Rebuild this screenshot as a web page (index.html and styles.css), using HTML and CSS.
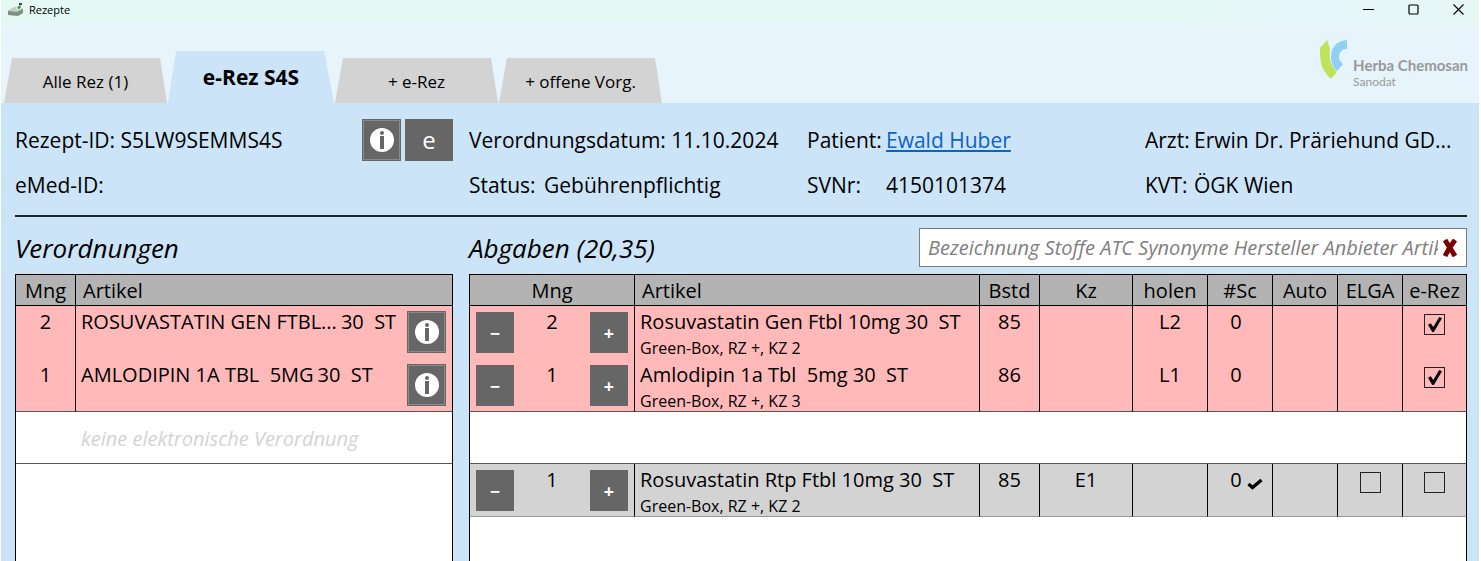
FILE: index.html
```html
<!DOCTYPE html>
<html lang="de">
<head>
    <meta charset="UTF-8">
    <meta name="viewport" content="width=device-width, initial-scale=1.0">
    <title>Rezepte</title>
    <link rel="stylesheet" href="styles.css">
</head>
<body>
    <svg class="sprite" width="0" height="0" aria-hidden="true">
        <symbol id="info" viewBox="0 0 24 24">
            <circle cx="12" cy="12" r="12" fill="#fff"/>
            <circle cx="12" cy="5" r="2" fill="#666"/>
            <rect x="10" y="8" width="4" height="13" fill="#666"/>
        </symbol>
    </svg>

    <div class="titlebar">
        <svg class="app-icon" width="18" height="14" viewBox="0 0 18 14" aria-hidden="true">
            <path d="M1 8 L8 4 L16 6 L16 10 L11 13 L1 12 Z" fill="#7f8f80"/>
            <path d="M1 8 L8 4 L16 6 L10 9 Z" fill="#c3cdc3"/>
            <path d="M8 3 L13 2 L14 6 L10 7 Z" fill="#e6ebe6"/>
            <path d="M10 5 L13 2 L14 4 L12 6 Z" fill="#2e8b3d"/>
            <path d="M12 0 H15 V2 H12 Z" fill="#445"/>
        </svg>
        <span class="app-name">Rezepte</span>
        <div class="window-buttons">
            <button type="button" aria-label="Minimieren"><svg width="11" height="11" viewBox="0 0 11 11"><path d="M0 5.5 H11" stroke="#000" fill="none"/></svg></button>
            <button type="button" aria-label="Maximieren"><svg width="11" height="11" viewBox="0 0 11 11"><rect x="1" y="1" width="9" height="9" rx="1" stroke="#000" stroke-width="1.2" fill="none"/></svg></button>
            <button type="button" aria-label="Schließen"><svg width="11" height="11" viewBox="0 0 11 11"><path d="M0.5 0.5 L10.5 10.5 M10.5 0.5 L0.5 10.5" stroke="#000" stroke-width="1.1" fill="none"/></svg></button>
        </div>
    </div>

    <header class="header">
        <nav class="tabs">
            <button type="button" class="tab">Alle Rez (1)</button>
            <button type="button" class="tab active">e-Rez S4S</button>
            <button type="button" class="tab">+ e-Rez</button>
            <button type="button" class="tab">+ offene Vorg.</button>
        </nav>
        <div class="logo">
            <svg width="28" height="40" viewBox="0 0 28 40" aria-hidden="true">
                <path d="M7 0 L0 8 C0 22 1 30 11 39 L17 32 C10 25 9 18 10 9 C9 5 8 3 7 0 Z" fill="#bfe25a"/>
                <path d="M27 0 C15 1 11 9 11 17 C11 23 13 27 17 31 L23 24 C20 22 19 19 19 17 C19 12 22 9 27 9 Z" fill="#8fd0f4"/>
            </svg>
            <div class="logo-text">
                <span class="logo-name">Herba Chemosan</span>
                <span class="logo-sub">Sanodat</span>
            </div>
        </div>
    </header>

    <main class="content">
        <section class="details">
            <div class="field">
                <span>Rezept-ID: S5LW9SEMMS4S</span>
                <div class="field-buttons">
                    <button type="button" class="info-btn" aria-label="Info"><svg width="24" height="24"><use href="#info"/></svg></button>
                    <button type="button" class="e-btn">e</button>
                </div>
            </div>
            <div class="field">Verordnungsdatum: 11.10.2024</div>
            <div class="field"><span class="label wide">Patient:</span><a href="#">Ewald Huber</a></div>
            <div class="field"><span class="label narrow">Arzt:</span><span>Erwin Dr. Präriehund GD...</span></div>

            <div class="field">eMed-ID:</div>
            <div class="field"><span class="label middle">Status:</span>Gebührenpflichtig</div>
            <div class="field"><span class="label wide">SVNr:</span>4150101374</div>
            <div class="field"><span class="label narrow">KVT:</span>ÖGK Wien</div>
        </section>

        <div class="columns">
            <section class="panel">
                <div class="panel-head">
                    <h2>Verordnungen</h2>
                </div>
                <div class="table-box">
                    <table>
                        <thead>
                            <tr><th class="w-60">Mng</th><th class="left">Artikel</th></tr>
                        </thead>
                        <tbody>
                            <tr class="red">
                                <td>2</td>
                                <td class="left">
                                    <div class="article"><span>ROSUVASTATIN GEN FTBL...</span><span class="pack">30&nbsp; ST</span>
                                    <button type="button" class="info-btn" aria-label="Info"><svg width="24" height="24"><use href="#info"/></svg></button></div>
                                </td>
                            </tr>
                            <tr class="red last">
                                <td>1</td>
                                <td class="left">
                                    <div class="article"><span>AMLODIPIN 1A TBL&nbsp; 5MG</span><span class="pack">30&nbsp; ST</span>
                                    <button type="button" class="info-btn" aria-label="Info"><svg width="24" height="24"><use href="#info"/></svg></button></div>
                                </td>
                            </tr>
                            <tr class="empty last">
                                <td class="plain"></td>
                                <td class="left">keine elektronische Verordnung</td>
                            </tr>
                        </tbody>
                    </table>
                </div>
            </section>

            <section class="panel">
                <div class="panel-head">
                    <h2>Abgaben (20,35)</h2>
                    <div class="search">
                        <input type="text" aria-label="Artikelsuche" placeholder="Bezeichnung Stoffe ATC Synonyme Hersteller Anbieter Artikel">
                        <button type="button" aria-label="Leeren"><svg width="16" height="18" viewBox="0 0 16 18"><path d="M3 1 C6 6 10 12 13 17 M13 1 C10 5 6 11 3 17" stroke="#7a0000" stroke-width="5" fill="none"/></svg></button>
                    </div>
                </div>
                <div class="table-box">
                    <table>
                        <thead>
                            <tr>
                                <th class="w-165">Mng</th>
                                <th class="left">Artikel</th>
                                <th class="w-60">Bstd</th>
                                <th class="w-93">Kz</th>
                                <th class="w-75">holen</th>
                                <th class="w-65">#Sc</th>
                                <th class="w-65">Auto</th>
                                <th class="w-65">ELGA</th>
                                <th class="w-63">e-Rez</th>
                            </tr>
                        </thead>
                        <tbody>
                            <tr class="red">
                                <td><div class="amount"><button type="button">−</button><span>2</span><button type="button">+</button></div></td>
                                <td class="left">Rosuvastatin Gen Ftbl 10mg 30&nbsp; ST<small>Green-Box, RZ +, KZ 2</small></td>
                                <td>85</td><td></td><td>L2</td><td class="scan">0</td><td></td><td></td>
                                <td><input type="checkbox" aria-label="e-Rez" checked></td>
                            </tr>
                            <tr class="red last">
                                <td><div class="amount"><button type="button">−</button><span>1</span><button type="button">+</button></div></td>
                                <td class="left">Amlodipin 1a Tbl&nbsp; 5mg 30&nbsp; ST<small>Green-Box, RZ +, KZ 3</small></td>
                                <td>86</td><td></td><td>L1</td><td class="scan">0</td><td></td><td></td>
                                <td><input type="checkbox" aria-label="e-Rez" checked></td>
                            </tr>
                            <tr class="empty last"><td colspan="9"></td></tr>
                            <tr class="grey last">
                                <td><div class="amount"><button type="button">−</button><span>1</span><button type="button">+</button></div></td>
                                <td class="left">Rosuvastatin Rtp Ftbl 10mg 30&nbsp; ST<small>Green-Box, RZ +, KZ 2</small></td>
                                <td>85</td><td>E1</td><td></td>
                                <td class="scan"><span class="scanned">0<svg width="16" height="12" viewBox="0 0 16 12"><path d="M1.5 6 L5.5 9.5 L14.5 2" stroke="#000" stroke-width="3.4" fill="none"/></svg></span></td>
                                <td></td>
                                <td><input type="checkbox" aria-label="ELGA"></td>
                                <td><input type="checkbox" aria-label="e-Rez"></td>
                            </tr>
                        </tbody>
                    </table>
                </div>
            </section>
        </div>
    </main>
</body>
</html>
```

FILE: styles.css
```css
* {
    box-sizing: border-box;
}

body {
    margin: 0;
    padding: 0 2px 0 1px;
    min-height: 100vh;
    display: flex;
    flex-direction: column;
    background-color: #fff;
    font-family: "Segoe UI", "Open Sans", sans-serif;
    font-size: 20px;
    line-height: 28px;
    color: #000;
}

button, input {
    font-family: inherit;
    margin: 0;
}

button {
    display: flex;
    align-items: center;
    justify-content: center;
    padding: 0;
    border: none;
    color: #000;
    cursor: pointer;
}

.sprite {
    position: absolute;
}

/* Titelleiste */
.titlebar {
    display: flex;
    align-items: center;
    height: 25px;
    padding: 0 15px 6px 6px;
    background: linear-gradient(90deg, #e4f9f4, #e4f9f4 80%, #e7f6fb 88%, #e6f7f5);
}

.app-name {
    margin-left: 4px;
    font-size: 11px;
    line-height: 18px;
}

.window-buttons {
    display: flex;
    gap: 34px;
    margin-left: auto;
}

.window-buttons button {
    background: none;
}

/* Reiter */
.header {
    display: flex;
    justify-content: space-between;
    height: 78px;
    padding: 0 11px 0 3px;
    background-color: #e8f4fb;
}

.tabs {
    display: flex;
    align-items: flex-end;
    gap: 1px;
}

.tab {
    width: 163px;
    height: 45px;
    padding-top: 2px;
    background-color: #d3d3d3;
    font-size: 17px;
    clip-path: polygon(8px 0, 156px 0, 100% 100%, 0 100%);
}

.tab.active {
    height: 52px;
    width: 166px;
    padding-top: 0;
    background-color: #cce4f7;
    font-size: 21px;
    font-weight: bold;
}

.logo {
    display: flex;
    align-items: flex-start;
    gap: 5px;
    padding-top: 15px;
}

.logo-text {
    display: flex;
    flex-direction: column;
    padding-top: 17px;
    font-family: Lato, sans-serif;
    color: #999;
}

.logo-name {
    font-size: 15px;
    font-weight: bold;
    line-height: 17px;
}

.logo-sub {
    font-size: 12px;
    line-height: 15px;
}

/* Inhalt */
.content {
    flex: 1;
    display: flex;
    flex-direction: column;
    padding: 14px 12px 0 14px;
    background-color: #cce4f7;
}

.details {
    display: grid;
    grid-template-columns: 438fr 322fr 322fr 322fr;
    column-gap: 16px;
    padding-bottom: 8px;
    border-bottom: 2px solid #222;
    font-size: 21px;
}

.field {
    display: flex;
    align-items: center;
    height: 45px;
    min-width: 0;
    white-space: nowrap;
}

.field a {
    color: #0a63c9;
}

.label {
    flex: none;
}

.wide {
    width: 79px;
}

.middle {
    width: 75px;
}

.narrow {
    width: 49px;
}

.field-buttons {
    display: flex;
    gap: 4px;
    margin-left: auto;
}

.info-btn {
    flex: none;
    width: 39px;
    height: 42px;
    background-color: #666;
    border: 1px solid #666;
    box-shadow: inset 0 0 0 1px #8a8a8a;
}

.e-btn {
    width: 48px;
    height: 42px;
    background-color: #666;
    color: #fff;
    font-size: 24px;
}

.columns {
    flex: 1;
    display: grid;
    grid-template-columns: 438fr 998fr;
    column-gap: 16px;
}

.panel {
    display: flex;
    flex-direction: column;
    min-width: 0;
}

.panel-head {
    display: flex;
    align-items: center;
    justify-content: space-between;
    height: 57px;
    padding-top: 4px;
}

h2 {
    margin: 0;
    font-size: 26px;
    font-weight: normal;
    font-style: italic;
}

.search {
    display: flex;
    align-items: center;
    width: 548px;
    height: 39px;
    padding: 0 8px;
    border: 1px solid #7a7a7a;
    background-color: #fff;
}

.search input {
    flex: 1;
    min-width: 0;
    padding: 0;
    border: none;
    outline: none;
    font-size: 20px;
    font-style: italic;
}

.search input::placeholder {
    color: #808080;
    opacity: 1;
}

.search button {
    margin-left: 4px;
    background: none;
}

/* Tabellen */
.table-box {
    flex: 1;
    border: 1px solid #000;
    border-bottom: none;
    background-color: #fff;
}

table {
    width: 100%;
    table-layout: fixed;
    border-collapse: separate;
    border-spacing: 0;
}

th {
    height: 31px;
    padding: 2px 0 0;
    background-color: #b3b3b3;
    border-right: 1px solid #000;
    border-bottom: 1px solid #000;
    font-weight: normal;
}

td {
    height: 53px;
    padding: 2px 0 0;
    border-right: 1px solid #000;
    text-align: center;
    vertical-align: top;
    white-space: nowrap;
}

th:last-child,
td:last-child,
td.plain {
    border-right: none;
}

th.left {
    padding-left: 7px;
    text-align: left;
}

td.left {
    padding-left: 5px;
    text-align: left;
}

.w-60 { width: 60px; }
.w-63 { width: 63px; }
.w-65 { width: 65px; }
.w-75 { width: 75px; }
.w-93 { width: 93px; }
.w-165 { width: 165px; }

.red td {
    background-color: #ffb9b9;
}

.grey td {
    background-color: #d3d3d3;
}

.last td {
    border-bottom: 1px solid #555;
}

.grey.last td {
    border-bottom-color: #999;
}

.empty td {
    height: 52px;
    vertical-align: middle;
    font-style: italic;
    color: #d3d3d3;
}

small {
    display: block;
    padding-top: 4px;
    font-size: 16px;
    line-height: 17px;
}

.article {
    display: flex;
    align-items: flex-start;
    padding-right: 6px;
}

.pack {
    margin-left: 4px;
}

.article .info-btn {
    margin: 3px 0 0 auto;
}

.amount {
    display: flex;
    justify-content: space-between;
    padding: 0 6px;
}

.amount button {
    width: 38px;
    height: 41px;
    margin-top: 4px;
    background-color: #666;
    color: #fff;
    font-size: 18px;
    font-weight: bold;
}

td.scan {
    padding-right: 8px;
}

.scanned {
    position: relative;
}

/* Haken neben der Scan-Anzahl */
.scanned svg {
    position: absolute;
    left: 17px;
    top: 12px;
}

input[type="checkbox"] {
    appearance: none;
    position: relative;
    width: 21px;
    height: 21px;
    margin-top: 6px;
    border: 1px solid #222;
}

input[type="checkbox"]:checked::after {
    content: "";
    position: absolute;
    left: 3px;
    top: 2px;
    width: 14px;
    height: 15px;
    background-color: #000;
    clip-path: polygon(0 52%, 20% 42%, 38% 66%, 80% 0, 100% 8%, 42% 100%, 30% 100%);
}
```
